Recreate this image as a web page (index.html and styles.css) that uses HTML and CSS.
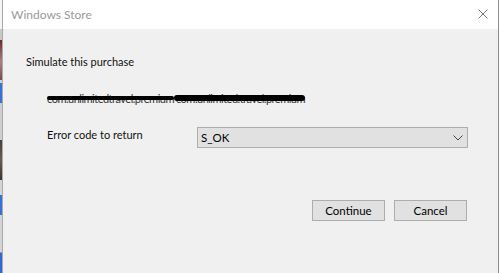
FILE: index.html
```html
<!DOCTYPE html>
<html lang="en">
<head>
  <meta charset="UTF-8">
  <title>Windows Store</title>
  <link rel="stylesheet" href="styles.css">
</head>
<body>
  <div class="screen">
    <!-- sliver of the desktop behind the dialog -->
    <div class="backdrop"></div>

    <div class="dialog">
      <div class="titlebar">
        <span class="title">Windows Store</span>
        <svg class="close" width="10" height="10" viewBox="0 0 10 10">
          <path d="M0.5 0.5 L9.5 9.5 M9.5 0.5 L0.5 9.5" stroke="#7a7a7a" stroke-width="1" fill="none"/>
        </svg>
      </div>

      <div class="content">
        <p class="heading">Simulate this purchase</p>

        <p class="product">
          <span class="redacted thin">com.unlimitedtravel.premium</span>
          <span class="redacted thick">com.unlimited.travel.premium</span>
        </p>

        <div class="field-row">
          <label class="field-label">Error code to return</label>
          <div class="select">
            <span>S_OK</span>
            <svg width="10" height="6" viewBox="0 0 10 6">
              <path d="M0.5 0.5 L5 5 L9.5 0.5" stroke="#444" stroke-width="1" fill="none"/>
            </svg>
          </div>
        </div>

        <div class="actions">
          <button class="btn">Continue</button>
          <button class="btn">Cancel</button>
        </div>
      </div>
    </div>
  </div>
</body>
</html>
```

FILE: styles.css
```css
* {
  margin: 0;
  padding: 0;
  box-sizing: border-box;
}

body {
  font-family: 'Lato', 'Noto Sans', sans-serif;
  font-size: 11px;
  color: #000;
  background-color: #f0f0f0;
}

.screen {
  display: flex;
  width: 499px;
  height: 273px;
  overflow: hidden;
}

/* Desktop wallpaper / taskbar bits peeking out on the left */
.backdrop {
  flex: none;
  width: 3px;
  border-right: 1px solid #a9a9a9;
  background: linear-gradient(to bottom,
    #f4f4f4 0, #f4f4f4 29px,
    #c8c8c8 29px, #c8c8c8 40px,
    #6e2a2e 40px, #a8837f 62px, #7a4a4a 80px,
    #d0d0d0 80px, #d0d0d0 83px,
    #3a6fd8 83px, #3a6fd8 103px,
    #cfcfcf 103px, #cfcfcf 140px,
    #4a3e3a 140px, #6b5a52 160px, #3b3331 180px,
    #d4d4d4 180px, #d4d4d4 195px,
    #3a6fd8 195px, #3a6fd8 215px,
    #d4d4d4 215px, #d4d4d4 252px,
    #9a9a9a 252px, #9a9a9a 253px,
    #3366d6 253px, #3366d6 273px);
}

.dialog {
  flex: 1;
  min-width: 0;
  display: flex;
  flex-direction: column;
  border-right: 1px solid #8c8c8c;
}

.titlebar {
  height: 29px;
  background-color: #ffffff;
  display: flex;
  align-items: center;
  justify-content: space-between;
  padding: 0 10px 1px 8px;
}

.title {
  color: #9a9a9a;
  font-size: 12px;
}

.content {
  flex: 1;
  padding: 25px 30px 0 23px;
}

.heading {
  line-height: 16px;
  color: #111;
}

.product {
  margin-top: 21px;
  padding-left: 21px;
  line-height: 16px;
  color: #333;
  white-space: nowrap;
  display: flex;
  gap: 2px;
}

.redacted {
  position: relative;
  letter-spacing: -0.5px;
}

.redacted::after {
  content: "";
  position: absolute;
  left: 0;
  right: 0;
  background-color: #000;
  border-radius: 3px;
}

.redacted.thin::after {
  top: 5px;
  height: 4px;
}

.redacted.thick::after {
  left: -2px;
  top: 4px;
  height: 6px;
}

.field-row {
  margin-top: 20px;
  padding-left: 21px;
  display: flex;
  align-items: flex-start;
}

.field-label {
  width: 150px;
  line-height: 16px;
  color: #111;
}

.select {
  width: 271px;
  height: 21px;
  background-color: #e1e1e1;
  border: 1px solid #adadad;
  display: flex;
  align-items: center;
  justify-content: space-between;
  padding: 0 4px 0 3px;
  font-size: 11.5px;
}

.actions {
  margin-top: 52px;
  display: flex;
  justify-content: flex-end;
  gap: 9px;
  padding-right: 1px;
}

.btn {
  width: 73px;
  height: 21px;
  font-family: inherit;
  font-size: 11.5px;
  color: #000;
  background-color: #e1e1e1;
  border: 1px solid #adadad;
}
```
